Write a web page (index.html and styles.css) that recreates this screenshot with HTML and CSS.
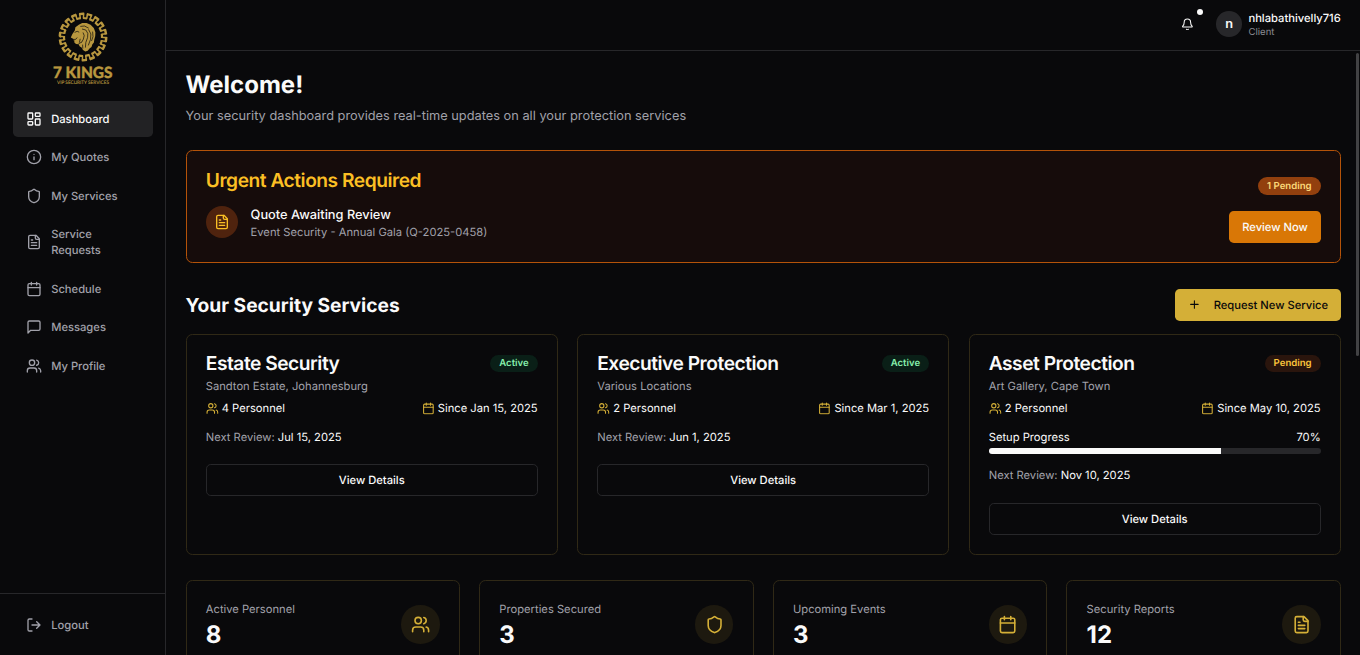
FILE: index.html
```html
<!DOCTYPE html>
<html lang="en">
<head>
<meta charset="utf-8">
<title>7 Kings Dashboard</title>
<link rel="stylesheet" href="styles.css">
</head>
<body>
<svg class="sprite" aria-hidden="true">
  <symbol id="dashboard" viewBox="0 0 24 24"><rect x="3" y="3" width="7" height="9" rx="1"/><rect x="14" y="3" width="7" height="5" rx="1"/><rect x="14" y="12" width="7" height="9" rx="1"/><rect x="3" y="16" width="7" height="5" rx="1"/></symbol>
  <symbol id="info" viewBox="0 0 24 24"><circle cx="12" cy="12" r="10"/><path d="M12 16v-4M12 8h.01"/></symbol>
  <symbol id="shield" viewBox="0 0 24 24"><path d="M20 13c0 5-3.5 7.5-7.66 8.95a1 1 0 0 1-.67-.01C7.5 20.5 4 18 4 13V6a1 1 0 0 1 1-1c2 0 4.5-1.2 6.24-2.72a1.17 1.17 0 0 1 1.52 0C14.51 3.81 17 5 19 5a1 1 0 0 1 1 1z"/></symbol>
  <symbol id="file" viewBox="0 0 24 24"><path d="M15 2H6a2 2 0 0 0-2 2v16a2 2 0 0 0 2 2h12a2 2 0 0 0 2-2V7Z"/><path d="M14 2v4a2 2 0 0 0 2 2h4M10 9H8M16 13H8M16 17H8"/></symbol>
  <symbol id="calendar" viewBox="0 0 24 24"><path d="M8 2v4M16 2v4M3 10h18"/><rect x="3" y="4" width="18" height="18" rx="2"/></symbol>
  <symbol id="message" viewBox="0 0 24 24"><path d="M21 15a2 2 0 0 1-2 2H7l-4 4V5a2 2 0 0 1 2-2h14a2 2 0 0 1 2 2z"/></symbol>
  <symbol id="users" viewBox="0 0 24 24"><path d="M16 21v-2a4 4 0 0 0-4-4H6a4 4 0 0 0-4 4v2"/><circle cx="9" cy="7" r="4"/><path d="M22 21v-2a4 4 0 0 0-3-3.87M16 3.13a4 4 0 0 1 0 7.75"/></symbol>
  <symbol id="logout" viewBox="0 0 24 24"><path d="M9 21H5a2 2 0 0 1-2-2V5a2 2 0 0 1 2-2h4M16 17l5-5-5-5M21 12H9"/></symbol>
  <symbol id="bell" viewBox="0 0 24 24"><path d="M10.268 21a2 2 0 0 0 3.464 0M3.262 15.326A1 1 0 0 0 4 17h16a1 1 0 0 0 .74-1.673C19.41 13.956 18 12.499 18 8A6 6 0 0 0 6 8c0 4.499-1.411 5.956-2.738 7.326"/></symbol>
  <symbol id="plus" viewBox="0 0 24 24"><path d="M5 12h14M12 5v14"/></symbol>
</svg>
<div class="app">
  <aside class="sidebar">
    <div class="brand">
      <svg class="logo" viewBox="0 0 64 77" width="64" height="77">
        <g class="ring">
          <circle cx="32" cy="26" r="23.2" pathLength="36" stroke-width="2.5" stroke-dasharray="1.3 .7"/>
          <circle cx="32" cy="26" r="19" pathLength="36" stroke-width="2.2" stroke-dasharray="1.35 .65" stroke-dashoffset="-.97"/>
          <circle cx="32" cy="26" r="21.2" pathLength="36" stroke-width="5" stroke-dasharray=".42 .58" stroke-dashoffset="-.94"/>
        </g>
        <path class="lion" d="M19.8 26.5l1.6-3.4 2.4-3.6.6-3.2 3.4-2.6 3.4-1.6 4.4-.2 4 1.8 3.2 3.2 1.6 4.4-.2 4-.9 3.2-.4 3-1.6 2-.8 2.4-2 1.6-1.8 2.2-2.4.8-2.3-1.5-1.4-2.6-1.8-.8-1.2-2.4-2.6-.2-1.8-1.8.3-1.7-1.5-.6.6-1z"/>
        <path class="mane" d="M23.6 21.4l2.6-1.1 2 .9M21.4 28.6l3.4-.3 1.4-1.8M29.3 15.4l4.2-.4 4.2 2.2M31 18l3.8 1 2 3.4-.2 4-1.8 5.2-.4 5M37.5 18.4l2.4 4.6-.4 5.4-2.2 6M32 21.5l1.2 3-.8 3.6-2 3.6M29.2 27.8l-.8 3.8M41.6 20.6l.4 5-1.5 4.4M27.4 33l3-1.8M31.6 33.6l.2 4"/>
        <text class="logo-name" x="31.7" y="67" textLength="59.4" lengthAdjust="spacingAndGlyphs">7 KINGS</text>
        <text class="logo-tag" x="32" y="73.2" textLength="52" lengthAdjust="spacingAndGlyphs">VIP SECURITY SERVICES</text>
      </svg>
    </div>
    <nav class="nav">
      <a class="nav-item active"><svg class="icon"><use href="#dashboard"/></svg><span>Dashboard</span></a>
      <a class="nav-item"><svg class="icon"><use href="#info"/></svg><span>My Quotes</span></a>
      <a class="nav-item"><svg class="icon"><use href="#shield"/></svg><span>My Services</span></a>
      <a class="nav-item"><svg class="icon"><use href="#file"/></svg><span>Service Requests</span></a>
      <a class="nav-item"><svg class="icon"><use href="#calendar"/></svg><span>Schedule</span></a>
      <a class="nav-item"><svg class="icon"><use href="#message"/></svg><span>Messages</span></a>
      <a class="nav-item"><svg class="icon"><use href="#users"/></svg><span>My Profile</span></a>
    </nav>
    <div class="sidebar-foot"><a class="nav-item"><svg class="icon"><use href="#logout"/></svg><span>Logout</span></a></div>
  </aside>
  <div class="page">
    <header class="topbar">
      <div class="bell"><svg class="icon small"><use href="#bell"/></svg><i class="dot"></i></div>
      <div class="avatar">n</div>
      <div class="user"><div class="user-name">nhlabathivelly716</div><div class="user-role">Client</div></div>
    </header>
    <main class="content">
      <i class="scroll-thumb"></i>
      <section class="welcome">
        <h1>Welcome!</h1>
        <p class="lead">Your security dashboard provides real-time updates on all your protection services</p>
      </section>
      <section class="urgent">
        <div class="urgent-main">
          <h2 class="card-title">Urgent Actions Required</h2>
          <div class="quote">
            <div class="quote-icon"><svg class="icon"><use href="#file"/></svg></div>
            <div><div class="quote-title">Quote Awaiting Review</div><div class="muted">Event Security - Annual Gala (Q-2025-0458)</div></div>
          </div>
        </div>
        <div class="urgent-side"><span class="badge count">1 Pending</span><button class="btn review">Review Now</button></div>
      </section>
      <section class="services">
        <div class="section-head"><h2>Your Security Services</h2><button class="btn request"><svg class="icon small"><use href="#plus"/></svg>Request New Service</button></div>
        <div class="service-grid">
          <article class="card">
            <div class="row"><h3 class="card-title">Estate Security</h3><span class="badge green">Active</span></div>
            <p class="place">Sandton Estate, Johannesburg</p>
            <div class="row facts"><span><svg class="icon small"><use href="#users"/></svg>4 Personnel</span><span><svg class="icon small"><use href="#calendar"/></svg>Since Jan 15, 2025</span></div>
            <p class="next"><span class="muted">Next Review:</span> Jul 15, 2025</p>
            <button class="btn outline">View Details</button>
          </article>
          <article class="card">
            <div class="row"><h3 class="card-title">Executive Protection</h3><span class="badge green">Active</span></div>
            <p class="place">Various Locations</p>
            <div class="row facts"><span><svg class="icon small"><use href="#users"/></svg>2 Personnel</span><span><svg class="icon small"><use href="#calendar"/></svg>Since Mar 1, 2025</span></div>
            <p class="next"><span class="muted">Next Review:</span> Jun 1, 2025</p>
            <button class="btn outline">View Details</button>
          </article>
          <article class="card">
            <div class="row"><h3 class="card-title">Asset Protection</h3><span class="badge amber">Pending</span></div>
            <p class="place">Art Gallery, Cape Town</p>
            <div class="row facts"><span><svg class="icon small"><use href="#users"/></svg>2 Personnel</span><span><svg class="icon small"><use href="#calendar"/></svg>Since May 10, 2025</span></div>
            <div class="progress"><div class="row"><span>Setup Progress</span><span>70%</span></div><div class="track"><div class="fill" style="width:70%"></div></div></div>
            <p class="next"><span class="muted">Next Review:</span> Nov 10, 2025</p>
            <button class="btn outline">View Details</button>
          </article>
        </div>
      </section>
      <section class="stats">
        <article class="card stat"><div><div class="muted">Active Personnel</div><div class="number">8</div></div><div class="stat-icon"><svg class="icon"><use href="#users"/></svg></div></article>
        <article class="card stat"><div><div class="muted">Properties Secured</div><div class="number">3</div></div><div class="stat-icon"><svg class="icon"><use href="#shield"/></svg></div></article>
        <article class="card stat"><div><div class="muted">Upcoming Events</div><div class="number">3</div></div><div class="stat-icon"><svg class="icon"><use href="#calendar"/></svg></div></article>
        <article class="card stat"><div><div class="muted">Security Reports</div><div class="number">12</div></div><div class="stat-icon"><svg class="icon"><use href="#file"/></svg></div></article>
      </section>
    </main>
  </div>
</div>
</body>
</html>
```
FILE: styles.css
```css
* { box-sizing: border-box; }
body, h1, h2, h3, p { margin: 0; }
body {
  background: #09090b;
  color: #fafafa;
  font: 400 11.2px/16px Inter, sans-serif;
  text-rendering: geometricPrecision;
  overflow: hidden;
}
.sprite { position: absolute; width: 0; height: 0; }
.icon {
  width: 16px;
  height: 16px;
  flex: none;
  fill: none;
  stroke: currentColor;
  stroke-width: 2;
  stroke-linecap: round;
  stroke-linejoin: round;
}
.icon.small { width: 12.8px; height: 12.8px; }
.muted { color: #a1a1aa; }
.row { display: flex; justify-content: space-between; }

.app { display: flex; height: 655px; }
.sidebar {
  width: 166.4px;
  flex: none;
  display: flex;
  flex-direction: column;
  border-right: 1px solid #27272a;
}
.brand { display: flex; justify-content: center; height: 101.4px; padding-top: 10.6px; }
.ring { fill: none; stroke: #b8973f; }
.lion { fill: #b8973f; }
.mane { fill: none; stroke: #09090b; stroke-width: .7; }
.logo-name, .logo-tag { fill: #b8973f; stroke: #b8973f; text-anchor: middle; }
.logo-name { font: 900 15.6px Lato, sans-serif; stroke-width: .4; }
.logo-tag { font: 400 4.8px Lato, sans-serif; stroke-width: .1; }

.nav { display: flex; flex-direction: column; gap: 3.24px; padding: 0 12.8px; }
.nav-item {
  display: flex;
  align-items: center;
  gap: 9.6px;
  padding: 9.6px 12.8px;
  border-radius: 4.8px;
  color: #a1a1aa;
  font-weight: 500;
}
.nav-item.active { background: #222224; color: #fafafa; }
.sidebar-foot { margin-top: auto; height: 62px; padding: 13.4px 12.8px 0; border-top: 1px solid #27272a; }

.page { flex: 1; min-width: 0; display: flex; flex-direction: column; }
.topbar {
  display: flex;
  align-items: center;
  justify-content: flex-end;
  height: 51px;
  flex: none;
  padding: 0 19.2px 2px;
  border-bottom: 1px solid #27272a;
}
.bell { position: relative; display: flex; margin-right: 22.4px; }
.dot { position: absolute; top: -8.6px; right: -9.2px; width: 6px; height: 6px; border-radius: 50%; background: #fafafa; }
.avatar {
  display: grid;
  place-items: center;
  width: 25.6px;
  height: 25.6px;
  margin-right: 6.4px;
  padding-top: 1.4px;
  border-radius: 50%;
  background: #27272a;
  font-size: 12.8px;
  font-weight: 600;
}
.user { padding-top: 1.4px; }
.user-name { font-weight: 500; line-height: 16px; }
.user-role { padding-top: 1.6px; margin-bottom: -.8px; color: #8b8b92; font-size: 9.6px; line-height: 12.8px; }

.content {
  position: relative;
  flex: 1;
  min-height: 0;
  overflow: hidden;
  display: flex;
  flex-direction: column;
  gap: 25.6px;
  padding: 19.6px 19.2px 0;
}
.scroll-thumb { position: absolute; top: 2px; right: 1px; width: 3px; height: 303px; border-radius: 2px; background: #424244; }
.welcome { height: 54.2px; }
h1 { font-size: 24px; line-height: 28.8px; font-weight: 700; }
.lead { margin-top: 7.2px; color: #a1a1aa; font-size: 12.8px; line-height: 19.2px; }

.card-title { font-size: 19.2px; line-height: 19.2px; font-weight: 600; letter-spacing: -.48px; }
.badge { padding: 2.4px 9px .8px; border-radius: 9px; font-size: 9.6px; line-height: 14.4px; font-weight: 600; }
.badge.green { background: #0a1f17; color: #86efac; }
.badge.amber { background: #2a150d; color: #fcc53c; }
.badge.count { background: #92400e; color: #fcd979; }
.btn {
  display: flex;
  align-items: center;
  justify-content: center;
  height: 32px;
  padding: 0 12.8px;
  border: 0;
  border-radius: 4.8px;
  color: #fafafa;
  font: 500 11.2px/16px Inter, sans-serif;
  text-rendering: inherit;
}
.btn.review { background: #d97706; }
.btn.request { gap: 12.8px; background: #d4af37; color: #09090b; }
.btn.outline { width: 100%; border: 1px solid #27272a; background: #09090b; }

.urgent {
  display: flex;
  justify-content: space-between;
  height: 112.8px;
  flex: none;
  padding: 19.2px;
  border: 1px solid #b45309;
  border-radius: 6.4px;
  background: #160c0b;
}
.urgent .card-title { color: #fbbf24; }
.quote { display: flex; align-items: center; gap: 12.8px; margin-top: 14.8px; }
.quote-icon { display: grid; place-items: center; width: 32px; height: 32px; border-radius: 50%; background: #4f230e; color: #fbbf24; }
.quote-title { padding-top: 1.5px; margin-bottom: -1.5px; font-size: 12.8px; line-height: 19.2px; font-weight: 500; }
.urgent-side { display: flex; flex-direction: column; align-items: flex-end; justify-content: flex-end; gap: 16px; }

.section-head { display: flex; justify-content: space-between; align-items: center; margin-bottom: 12.8px; }
.section-head h2 { padding-top: 1.6px; font-size: 19.2px; line-height: 25.6px; font-weight: 700; }
.service-grid { display: grid; grid-template-columns: repeat(3, 1fr); gap: 19.2px; }
.card { padding: 19.2px; border: 1px solid #302916; border-radius: 6.4px; }
.service-grid .card { height: 221.2px; }
.card .row { align-items: center; }
.place { margin-top: 4.8px; color: #a1a1aa; }
.facts { margin: 6.4px 0 12.8px; }
.facts span { display: flex; align-items: center; gap: 3.2px; }
.facts .icon { color: #d4af37; }
.progress { margin-bottom: 12.8px; }
.track { height: 6.4px; margin-top: 3px; margin-bottom: 13px; border-radius: 4px; background: #27272a; overflow: hidden; }
.fill { height: 100%; background: #fafafa; }
.next { margin-bottom: 19.2px; }

.stats { display: grid; grid-template-columns: repeat(4, 1fr); gap: 19.2px; }
.stat { display: flex; justify-content: space-between; align-items: center; height: 88.4px; }
.number { margin-top: 4.2px; margin-bottom: -1px; font-size: 24px; line-height: 28.8px; font-weight: 700; }
.stat-icon { display: grid; place-items: center; width: 38.4px; height: 38.4px; border-radius: 50%; background: #1d190f; color: #d4af37; }
.stat-icon .icon { width: 19.2px; height: 19.2px; }
```
